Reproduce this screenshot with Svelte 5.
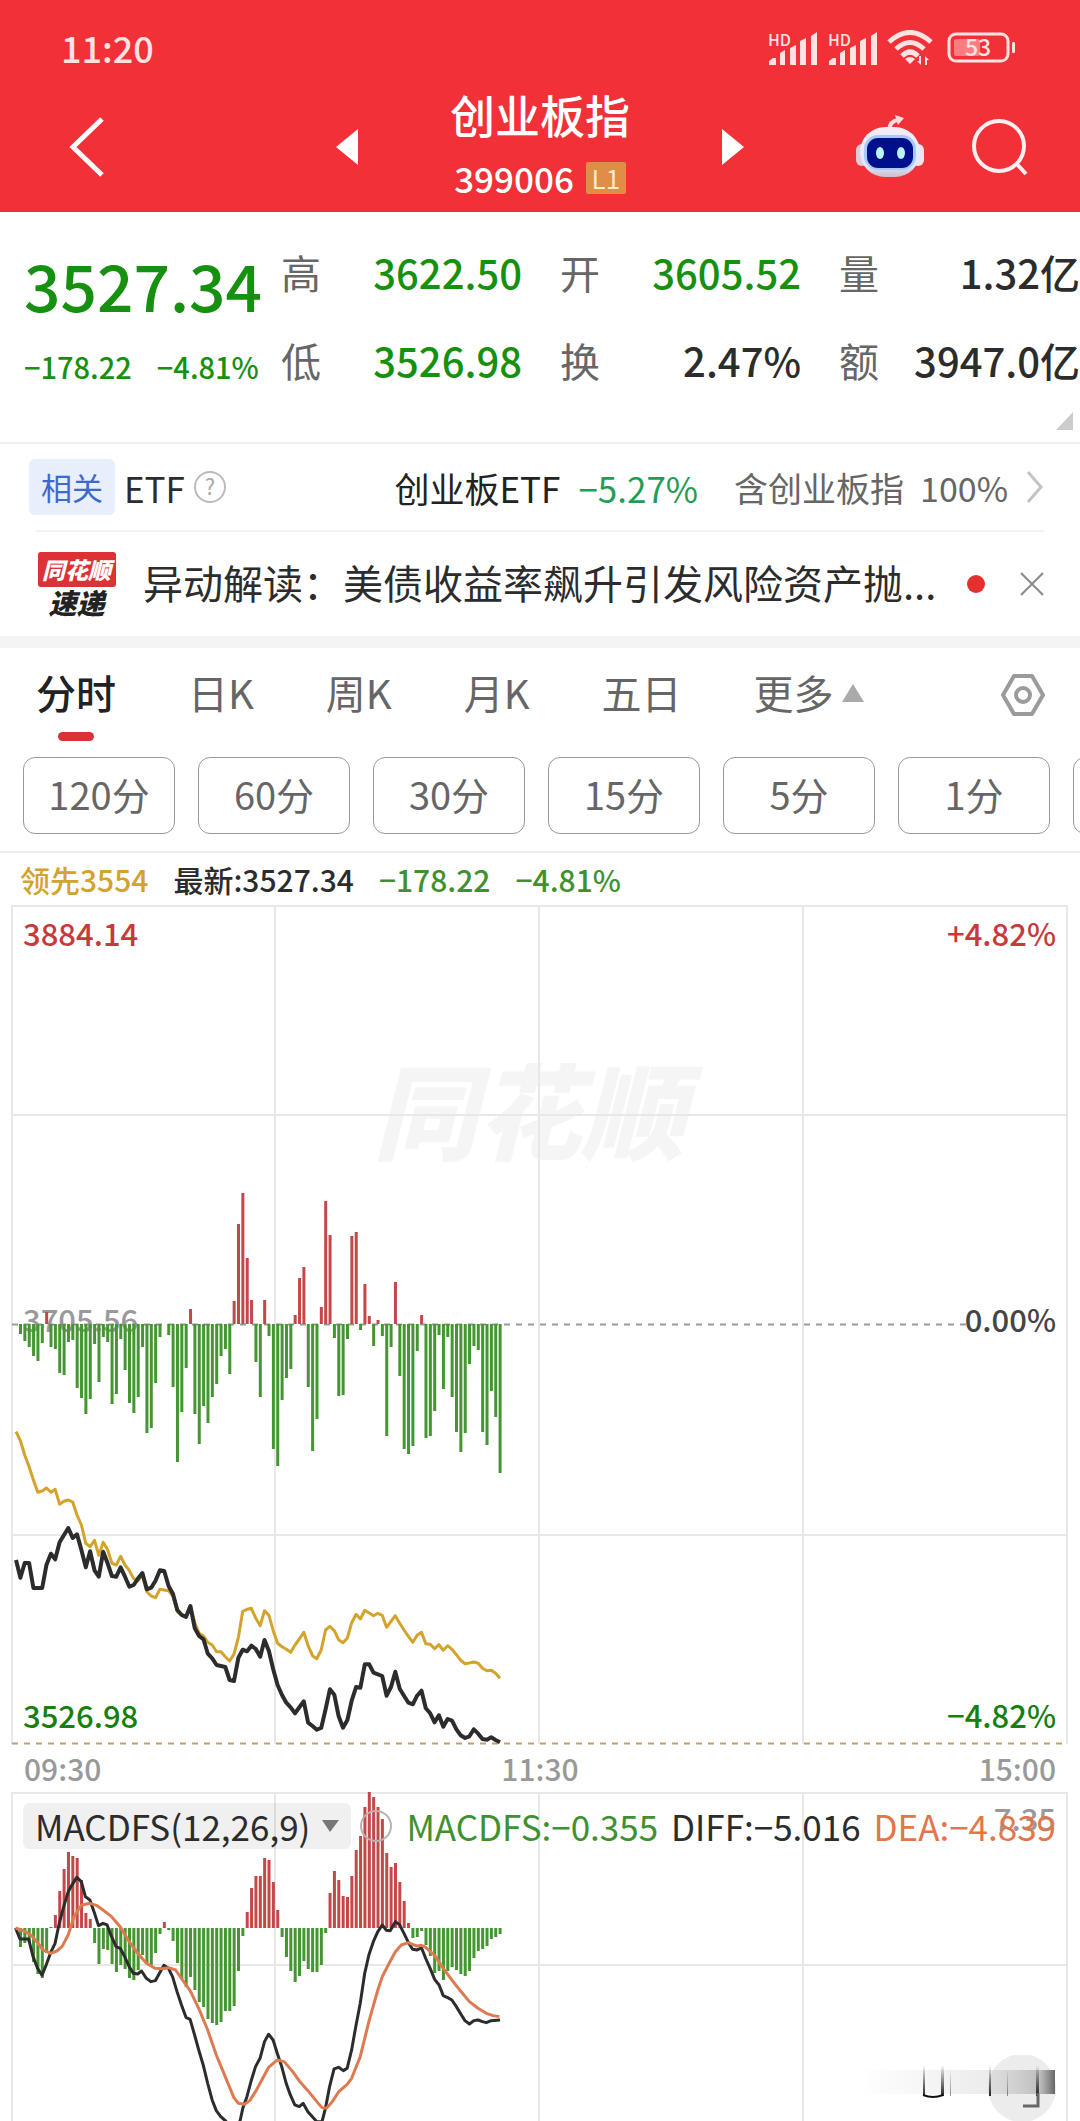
<script lang="ts">
  type Quote = { label: string; value: string; down?: boolean };

  const quotes: Quote[] = [
    { label: '高', value: '3622.50', down: true },
    { label: '开', value: '3605.52', down: true },
    { label: '量', value: '1.32亿' },
    { label: '低', value: '3526.98', down: true },
    { label: '换', value: '2.47%' },
    { label: '额', value: '3947.0亿' }
  ];

  const tabs = ['分时', '日K', '周K', '月K', '五日'];
  const periods = ['120分', '60分', '30分', '15分', '5分', '1分'];

  let activeTab = $state('分时');

  const STEP = 4.36;
  const ZERO_Y = 419;
  const MACD_ZERO_Y = 136;

  // one bar per minute, above or below the previous close
  const volume = [
    -10, -17, -23, -32, -37, -19, 12, -23, -25, -49, -51, -18, -16, -64, -74, -90, -75, -20, -58, -13,
    -18, -80, -70, -15, -46, -79, -89, -73, -23, -109, -104, -59, -13, 0, -11, -63, -138, -88, -44, 15,
    -90, -120, -82, -99, -73, -60, -32, -25, -50, 23, 100, 131, 66, 24, -38, -73, 24, -12, -125, -142,
    -76, -54, -45, 9, 46, 57, -63, -127, -95, 17, 123, 89, -14, -72, -71, -15, 88, 92, -6, 40,
    8, -22, 4, -12, -112, -23, 42, -52, -125, -130, -122, -27, 9, -114, -112, -87, -11, -65, -13, -73,
    -108, -128, -109, -40, -22, -26, -108, -121, -67, -93, -149
  ];

  // minute samples, in thirds of a unit below PRICE_TOP
  const PRICE_TOP = 495;
  const price = [
    480, 533, 489, 489, 564, 564, 564, 494, 461, 478, 427, 405, 384, 414, 403, 450, 502, 454, 511, 530,
    455, 490, 528, 530, 502, 530, 560, 555, 535, 519, 568, 563, 542, 511, 513, 558, 582, 630, 645, 651,
    618, 685, 708, 718, 761, 775, 795, 798, 801, 840, 843, 773, 749, 754, 737, 747, 770, 720, 753, 808,
    855, 885, 908, 922, 940, 922, 904, 968, 978, 989, 984, 928, 868, 884, 948, 983, 960, 902, 861, 863,
    793, 793, 818, 823, 828, 887, 861, 815, 866, 887, 908, 913, 887, 872, 925, 940, 967, 946, 980, 957,
    962, 988, 1006, 1014, 1009, 988, 1001, 1017, 1019, 1012, 1020, 1027
  ];
  const lead = [
    95, 122, 165, 200, 240, 277, 273, 264, 277, 268, 313, 304, 300, 306, 345, 375, 430, 440, 421, 466,
    427, 449, 490, 495, 469, 495, 512, 536, 542, 525, 575, 588, 593, 568, 570, 572, 590, 635, 645, 648,
    620, 668, 700, 708, 727, 735, 755, 755, 770, 783, 762, 712, 634, 628, 625, 655, 677, 632, 646, 692,
    730, 740, 748, 757, 735, 717, 697, 737, 767, 776, 750, 690, 679, 692, 719, 728, 714, 668, 643, 657,
    631, 639, 647, 640, 646, 682, 664, 647, 670, 690, 709, 727, 706, 697, 731, 733, 746, 734, 751, 737,
    748, 764, 781, 791, 789, 786, 790, 805, 812, 811, 820, 835
  ];

  const macd = [
    -19, -15, -14, -34, -46, -50, -25, 1, 13, 37, 59, 76, 72, 70, 48, 15, 9, -15, -36, -21,
    -22, -36, -44, -37, -41, -50, -52, -42, -27, -35, -37, -25, -6, 6, -2, -13, -35, -51, -59, -49,
    -62, -74, -79, -91, -95, -97, -94, -83, -83, -78, -43, -8, 16, 40, 52, 52, 70, 68, 46, 18,
    -9, -29, -43, -54, -48, -33, -41, -44, -44, -37, -5, 35, 57, 48, 32, 31, 52, 78, 92, 121,
    136, 131, 121, 109, 75, 61, 65, 46, 27, 5, -10, -9, -3, -17, -28, -45, -43, -52, -43, -39,
    -42, -46, -48, -43, -30, -23, -21, -18, -11, -9, -6
  ];

  const diffLine =
    '45,534 58,567 83,567 96,620 109,655 122,676 134,645 147,608 160,580 172,520 185,470 198,425 210,403 223,382 236,395 248,440 261,450 273,485 286,527 299,520 311,525 324,560 337,590 349,595 362,620 375,650 387,670 400,672 411,663 425,685 438,695 451,692 463,670 476,646 489,655 501,680 514,725 527,765 540,802 552,808 565,855 577,900 590,945 603,1000 616,1050 628,1082 641,1100 655,1113 675,1135 697,1113 705,1075 717,1040 730,990 742,950 755,925 768,875 780,853 793,870 805,910 818,950 831,1000 843,1035 856,1065 869,1070 880,1060 894,1085 907,1100 920,1115 935,1115 945,1075 957,1010 970,957 983,952 997,962 1008,955 1021,900 1033,830 1046,760 1059,670 1071,615 1084,575 1097,545 1110,525 1122,541 1133,542 1148,515 1160,524 1173,550 1186,578 1198,598 1211,600 1224,594 1236,625 1249,655 1262,688 1275,705 1287,737 1300,743 1312,750 1325,770 1338,792 1350,812 1363,822 1376,812 1388,810 1401,815 1412,818 1426,812 1452,810';
  const deaLine =
    '45,534 70,543 90,555 109,578 125,600 147,610 165,603 180,590 198,555 215,500 236,466 261,460 280,466 299,480 324,500 349,530 375,575 400,610 425,640 450,655 470,656 489,653 510,660 530,690 552,722 577,775 603,840 628,915 654,980 679,1043 692,1060 710,1063 725,1052 742,1025 768,975 780,952 805,930 825,935 850,965 869,993 894,1022 920,1055 935,1073 948,1075 965,1055 983,1026 1008,1003 1021,985 1046,920 1071,815 1097,720 1110,680 1130,640 1148,605 1165,585 1186,578 1198,583 1211,588 1224,586 1236,592 1262,616 1287,655 1312,690 1338,724 1363,755 1388,775 1412,790 1432,797 1450,800';

  function toPoints(samples: number[]) {
    return samples.map((v, i) => `${(5 + i * STEP).toFixed(1)},${(PRICE_TOP + v / 3).toFixed(1)}`).join(' ');
  }
</script>

{#snippet signal()}
  <svg class="signal" viewBox="0 0 52 40" aria-hidden="true">
    <text x="1" y="18" font-size="16" font-weight="500">HD</text>
    <path d="M2 37v-4l4-3h3v7zM13 37V25l5-3v15zM23 37V20l6-3v20zM33 37V13l6-3v27zM44 37V8l6-4v33z" />
  </svg>
{/snippet}

<main class="page">
  <header class="header">
    <div class="status">
      <span class="clock">11:20</span>
      <div class="status-icons">
        {@render signal()}
        {@render signal()}
        <svg class="wifi" viewBox="0 0 48 36" aria-hidden="true">
          <g fill="none" stroke="#ffe3e3" stroke-width="5">
            <path d="M2 12Q23-7 44 12" />
            <path d="M9 19Q23 6 37 19" />
            <path d="M15 26Q23 18 31 26" />
          </g>
          <path fill="#ffe3e3" d="M18 29q5-4 10 0l-5 5zM34 26v9l-4-4h2v-5zM38 35v-9l4 4h-2v5z" />
        </svg>
        <svg class="battery" viewBox="0 0 70 40" aria-hidden="true">
          <rect x="2" y="6" width="59" height="27" rx="7" fill="none" stroke="#ffe3e3" stroke-width="3" />
          <rect x="7" y="11" width="26" height="17" rx="2" fill="#ff7d80" />
          <rect x="65" y="14" width="3" height="11" rx="1" fill="#ffe3e3" />
          <text x="31" y="28" text-anchor="middle" font-size="23" font-weight="500">53</text>
        </svg>
      </div>
    </div>

    <nav class="nav">
      <div class="nav-side">
        <button class="icon-btn" aria-label="返回">
          <svg width="36" height="60" viewBox="0 0 36 60"><path d="M33 2 4 30l29 28" fill="none" stroke="#fff" stroke-width="5" /></svg>
        </button>
      </div>
      <div class="switcher">
        <button class="icon-btn" aria-label="上一个">
          <svg width="22" height="36" viewBox="0 0 22 36"><path d="M22 0v36L0 18z" fill="#fff" /></svg>
        </button>
        <div class="heading">
          <h1>创业板指</h1>
          <div class="code">399006 <span class="level">L1</span></div>
        </div>
        <button class="icon-btn" aria-label="下一个">
          <svg width="22" height="36" viewBox="0 0 22 36"><path d="M0 0v36l22-18z" fill="#fff" /></svg>
        </button>
      </div>
      <div class="nav-side end">
        <button class="icon-btn" aria-label="智能助手">
          <svg width="70" height="64" viewBox="0 0 70 64">
            <defs>
              <linearGradient id="shell" x1="0" y1="0" x2="0" y2="1">
                <stop offset="0" stop-color="#f4ecf2" />
                <stop offset="0.75" stop-color="#dfeaff" />
                <stop offset="1" stop-color="#cdbfca" />
              </linearGradient>
            </defs>
            <path d="M34 15q1-9 9-10" fill="none" stroke="#ffdcdc" stroke-width="4" />
            <path d="M40 0l9 3-6 7z" fill="#ffdcdc" />
            <rect x="1" y="29" width="12" height="22" rx="6" fill="#dccdd8" />
            <rect x="57" y="29" width="12" height="22" rx="6" fill="#f0e4ec" />
            <rect x="5" y="12" width="60" height="50" rx="25" fill="url(#shell)" />
            <rect x="9" y="20" width="52" height="35" rx="14" fill="#a9c8fb" />
            <rect x="12" y="23" width="46" height="30" rx="11" fill="#000f8c" />
            <ellipse cx="25" cy="38" rx="4" ry="6" fill="#b9f3ff" />
            <ellipse cx="46" cy="38" rx="4" ry="6" fill="#b9f3ff" />
          </svg>
        </button>
        <button class="icon-btn" aria-label="搜索">
          <svg width="60" height="60" viewBox="0 0 60 60">
            <g fill="none" stroke="#fff0f0" stroke-width="4">
              <circle cx="29" cy="29" r="25" />
              <path d="M46 46l10 11" />
            </g>
          </svg>
        </button>
      </div>
    </nav>
  </header>

  <section class="summary">
    <div class="last">
      <div class="last-price">3527.34</div>
      <div class="last-change"><span>−178.22</span><span>−4.81%</span></div>
    </div>
    <dl class="quotes">
      {#each quotes as q (q.label)}
        <div class="quote">
          <dt>{q.label}</dt>
          <dd class:down={q.down}>{q.value}</dd>
        </div>
      {/each}
    </dl>
    <span class="corner"></span>
  </section>

  <section class="etf">
    <span class="tag">相关</span>
    <span class="etf-title">ETF</span>
    <svg class="help" viewBox="0 0 32 32" aria-hidden="true">
      <circle cx="16" cy="16" r="15" fill="none" stroke="#bbb" stroke-width="2" />
      <text x="16" y="24" text-anchor="middle" font-size="22" fill="#aaa">?</text>
    </svg>
    <a class="etf-link" href="#etf">
      <span class="etf-name">创业板ETF</span>
      <span class="etf-change">−5.27%</span>
      <span class="etf-share"><span>含创业板指</span><span>100%</span></span>
      <svg width="18" height="32" viewBox="0 0 18 32" aria-hidden="true"><path d="M2 1l13 15L2 31" fill="none" stroke="#c4c4c4" stroke-width="3" /></svg>
    </a>
  </section>

  <section class="news">
    <div class="brand">
      <span class="brand-top">同花顺</span>
      <span class="brand-bottom">速递</span>
    </div>
    <a class="news-title" href="#news">异动解读：美债收益率飙升引发风险资产抛...</a>
    <span class="dot"></span>
    <button class="icon-btn" aria-label="关闭">
      <svg width="24" height="24" viewBox="0 0 24 24"><path d="M1 1l22 22M23 1 1 23" stroke="#8a8a8a" stroke-width="2" /></svg>
    </button>
  </section>

  <nav class="tabs">
    {#each tabs as tab (tab)}
      <button class="tab" class:active={tab === activeTab} onclick={() => (activeTab = tab)}>{tab}</button>
    {/each}
    <button class="tab more">更多<svg width="22" height="18" viewBox="0 0 22 18"><path d="M11 0l11 18H0z" fill="#aaa" /></svg></button>
    <button class="icon-btn settings" aria-label="设置">
      <svg width="46" height="44" viewBox="0 0 46 44">
        <g fill="none" stroke="#9b9b9b" stroke-width="4">
          <path d="M14 3h18l11 19-11 19H14L3 22z" stroke-linejoin="round" />
          <circle cx="23" cy="22" r="7" />
        </g>
      </svg>
    </button>
  </nav>

  <div class="periods">
    {#each periods as p (p)}
      <button class="period">{p}</button>
    {/each}
    <button class="period" aria-label="更多周期"></button>
  </div>

  <div class="legend">
    <span class="lead">领先3554</span>
    <span>最新:3527.34</span>
    <span class="fall">−178.22</span>
    <span class="fall">−4.81%</span>
  </div>

  <section class="charts">
    <svg class="chart" viewBox="0 0 1057 840" role="img" aria-label="分时走势">
      <text class="watermark" x="518" y="247" text-anchor="middle">同花顺</text>
      <g class="grid">
        <path d="M1 839V1h1055v838M264 1v838M528 1v838M792 1v838M1 210h1055M1 630h1055" />
      </g>
      <text class="axis muted" x="12" y="427">3705.56</text>
      <path class="zero" d="M1 419.5h955" />
      {#each volume as v, i}
        <rect x={8 + i * STEP} y={v > 0 ? ZERO_Y - v : ZERO_Y} width="3" height={Math.abs(v)} fill={v > 0 ? '#c4474a' : '#459633'} />
      {/each}
      <path class="floor" d="M1 838.5h1055" />
      <polyline points={toPoints(lead)} stroke="#d3a32c" />
      <polyline class="thick" points={toPoints(price)} stroke="#2c2c2c" />
      <text class="axis rise" x="12" y="41">3884.14</text>
      <text class="axis rise" x="1045" y="41" text-anchor="end">+4.82%</text>
      <text class="axis" x="1045" y="427" text-anchor="end">0.00%</text>
      <text class="axis low" x="12" y="823">3526.98</text>
      <text class="axis low" x="1045" y="823" text-anchor="end">−4.82%</text>
    </svg>

    <div class="times"><span>09:30</span><span>11:30</span><span>15:00</span></div>

    <div class="macd">
      <svg class="chart" viewBox="0 0 1057 329" role="img" aria-label="MACDFS">
        <g class="grid">
          <path d="M1 329V1h1055v328M264 1v328M528 1v328M792 1v328M1 173h1055" />
        </g>
        {#each macd as v, i}
          <rect x={8 + i * STEP} y={v > 0 ? MACD_ZERO_Y - v : MACD_ZERO_Y} width="3" height={Math.abs(v)} fill={v > 0 ? '#c4474a' : '#459633'} />
        {/each}
        <g transform="translate(-11 -42) scale(0.3444 0.3333)">
          <polyline class="thin" points={diffLine} stroke="#2c2c2c" />
          <polyline class="thin" points={deaLine} stroke="#dd7a50" />
        </g>
        <text class="axis muted" x="1045" y="39" text-anchor="end">7.35</text>
      </svg>
      <div class="macd-bar">
        <button class="indicator">MACDFS(12,26,9)<svg width="17" height="12" viewBox="0 0 17 12"><path d="M0 0h17L8 12z" fill="#777" /></svg></button>
        <svg class="help" viewBox="0 0 32 32" aria-hidden="true"><circle cx="16" cy="16" r="15" fill="none" stroke="#b9b0b0" stroke-width="2" /></svg>
        <div class="readings">
          <span class="fall">MACDFS:−0.355</span>
          <span>DIFF:−5.016</span>
          <span class="dea">DEA:−4.839</span>
        </div>
      </div>
      <button class="float" aria-label="全屏">
        <svg width="200" height="66" viewBox="0 0 200 66">
          <defs>
            <linearGradient id="smear" x1="0" x2="1">
              <stop offset="0" stop-color="#999" stop-opacity="0" />
              <stop offset="0.7" stop-color="#999" stop-opacity="0.2" />
              <stop offset="0.92" stop-color="#888" stop-opacity="0.45" />
              <stop offset="1" stop-color="#555" stop-opacity="0.9" />
            </linearGradient>
            <linearGradient id="streak" x1="0" y1="0" x2="0" y2="1">
              <stop offset="0" stop-color="#222" stop-opacity="0" />
              <stop offset="1" stop-color="#222" />
            </linearGradient>
          </defs>
          <circle cx="166" cy="33" r="34" fill="#ececec" />
          <rect x="4" y="15" width="195" height="24" fill="url(#smear)" />
          <g fill="url(#streak)">
            <rect x="67" y="10" width="2" height="31" />
            <rect x="85" y="10" width="3" height="31" />
            <rect x="94" y="14" width="1" height="27" opacity="0.5" />
            <rect x="133" y="10" width="2" height="31" />
            <rect x="151" y="14" width="1" height="27" opacity="0.5" />
            <rect x="180" y="10" width="3" height="31" />
          </g>
          <path d="M67 40q10 4 20 0" fill="none" stroke="#111" stroke-width="2" />
          <path d="M182 38v13h-15" fill="none" stroke="#666" stroke-width="3" />
        </svg>
      </button>
    </div>
  </section>
</main>

<style>
  :global(body) {
    background: #fff;
  }

  .page {
    font-family: 'Noto Sans CJK SC', 'Noto Sans', sans-serif;
    color: #2c2c2c;
    background: #fff;
    overflow: hidden;
  }

  button {
    font: inherit;
    color: inherit;
    background: none;
    border: none;
    padding: 0;
    cursor: pointer;
  }

  a {
    color: inherit;
    text-decoration: none;
  }

  svg {
    display: block;
    flex: none;
  }

  .icon-btn {
    display: flex;
  }

  .header {
    background: #f23037;
    color: #fff;
    border-bottom: 1px solid #cf3d42;
  }

  .status {
    display: flex;
    align-items: center;
    justify-content: space-between;
    height: 72px;
    padding: 12px 63px 0 61px;
  }

  .clock {
    padding-bottom: 2px;
    font-size: 36px;
    font-weight: 500;
    line-height: 40px;
    color: #ffe3e3;
  }

  .status-icons {
    display: flex;
    align-items: center;
    gap: 8px;
  }

  .signal {
    width: 52px;
    height: 40px;
    fill: #ffe3e3;
  }

  .wifi {
    width: 48px;
    height: 36px;
  }

  .battery {
    width: 70px;
    height: 40px;
    margin-left: 4px;
    fill: #ffe3e3;
  }

  .nav {
    display: grid;
    grid-template-columns: 1fr 408px 1fr;
    align-items: center;
    height: 124px;
    padding-bottom: 3px;
  }

  .nav-side {
    padding-left: 69px;
  }

  .end {
    display: flex;
    align-items: center;
    justify-content: flex-end;
    gap: 45px;
    padding: 0 50px 0 0;
  }

  .switcher {
    display: flex;
    align-items: center;
    justify-content: space-between;
  }

  .heading {
    text-align: center;
  }

  h1 {
    margin: 0;
    font-size: 45px;
    font-weight: 500;
    line-height: 62px;
  }

  .code {
    display: flex;
    align-items: center;
    justify-content: center;
    gap: 12px;
    font-size: 35px;
    font-weight: 500;
    line-height: 64px;
  }

  .level {
    width: 40px;
    font-size: 26px;
    font-weight: 400;
    line-height: 32px;
    color: #ffeccb;
    background: #e08d45;
    border-radius: 2px;
  }

  .summary {
    position: relative;
    display: flex;
    padding-top: 20px;
    height: 210px;
    border-bottom: 2px solid #f0f0f0;
  }

  .last {
    width: 281px;
    box-sizing: border-box;
    padding-left: 24px;
    color: #16900f;
    white-space: nowrap;
  }

  .last-price {
    font-size: 64px;
    font-weight: 500;
    line-height: 104px;
  }

  .last-change {
    display: flex;
    gap: 25px;
    font-size: 29px;
    font-weight: 500;
    line-height: 60px;
  }

  .quotes {
    flex: 1;
    display: grid;
    grid-template-columns: repeat(3, 1fr);
    grid-auto-rows: 88px;
    column-gap: 38px;
    margin: 0;
    white-space: nowrap;
  }

  .quote {
    display: flex;
    justify-content: space-between;
    font-size: 40px;
    line-height: 80px;
  }

  dt {
    color: #666;
  }

  dd {
    margin: 0;
    font-weight: 500;
  }

  dd.down {
    color: #16900f;
  }

  .corner {
    position: absolute;
    right: 7px;
    bottom: 12px;
    border-left: 17px solid transparent;
    border-bottom: 18px solid #ccc;
  }

  .etf {
    display: flex;
    align-items: center;
    height: 86px;
    margin: 0 36px;
    font-size: 35px;
    border-bottom: 2px solid #f2f2f2;
    white-space: nowrap;
  }

  .tag {
    margin-left: -7px;
    padding: 0 12px;
    font-size: 31px;
    line-height: 56px;
    color: #3f68cc;
    background: #e7eefc;
    border-radius: 6px;
  }

  .etf-title {
    margin: 0 9px;
  }

  .help {
    width: 32px;
    height: 32px;
  }

  .etf-link {
    display: flex;
    align-items: center;
    margin-left: auto;
  }

  .etf-name {
    color: #222;
    margin-right: 18px;
  }

  .etf-change {
    color: #1f9d55;
    margin-right: 36px;
  }

  .etf-share {
    display: flex;
    gap: 16px;
    font-size: 34px;
    color: #666;
    margin-right: 18px;
  }

  .news {
    display: flex;
    align-items: center;
    height: 104px;
    padding: 0 36px;
    border-bottom: 12px solid #f4f4f4;
    white-space: nowrap;
  }

  .brand {
    display: flex;
    flex-direction: column;
    align-items: center;
    width: 81px;
    font-style: italic;
    font-weight: 900;
  }

  .brand-top {
    width: 78px;
    font-size: 23px;
    line-height: 35px;
    text-align: center;
    color: #fff;
    background: #dc3236;
    border-radius: 3px;
  }

  .brand-bottom {
    font-size: 28px;
    line-height: 30px;
    color: #222;
  }

  .news-title {
    margin-left: 26px;
    padding-bottom: 4px;
    font-size: 40px;
  }

  .dot {
    width: 18px;
    height: 18px;
    margin-left: auto;
    margin-right: 35px;
    border-radius: 50%;
    background: #e5302f;
  }

  .tabs {
    display: flex;
    align-items: center;
    gap: 72px;
    height: 93px;
    padding: 0 34px 0 36px;
    color: #666;
    font-size: 40px;
    white-space: nowrap;
  }

  .tab {
    position: relative;
    padding-bottom: 4px;
    line-height: 89px;
  }

  .active {
    color: #222;
    font-weight: 500;
  }

  .active::after {
    content: '';
    position: absolute;
    left: 50%;
    bottom: 0;
    width: 36px;
    height: 9px;
    margin-left: -18px;
    border-radius: 5px;
    background: #dc3236;
  }

  .more {
    display: flex;
    align-items: center;
    gap: 8px;
  }

  .settings {
    margin-left: auto;
  }

  .periods {
    display: flex;
    gap: 23px;
    padding: 16px 0 17px 23px;
    border-bottom: 2px solid #ececec;
    overflow: hidden;
  }

  .period {
    flex: 0 0 152px;
    height: 77px;
    padding-bottom: 4px;
    font-size: 38px;
    color: #666;
    border: 1px solid #999;
    border-radius: 12px;
  }

  .legend {
    display: flex;
    gap: 25px;
    padding-left: 20px;
    font-size: 30px;
    font-weight: 500;
    line-height: 52px;
  }

  .lead {
    color: #d3a32c;
  }

  .fall {
    color: #3f9130;
  }

  .dea {
    color: #e3754a;
  }

  .charts {
    padding: 0 12px 0 11px;
  }

  .chart {
    width: 100%;
  }

  .chart polyline {
    fill: none;
    stroke-width: 3;
    stroke-linejoin: round;
  }

  .chart .thick {
    stroke-width: 4;
  }

  .chart .thin {
    vector-effect: non-scaling-stroke;
  }

  .grid {
    fill: none;
    stroke: #e8e8e8;
    stroke-width: 2;
  }

  .zero,
  .floor {
    fill: none;
    stroke: #999;
    stroke-width: 2;
    stroke-dasharray: 6 6;
  }

  .floor {
    stroke: #c0a070;
  }

  .watermark {
    font-size: 104px;
    font-weight: 900;
    font-style: italic;
    fill: #f5f5f5;
  }

  .axis {
    font-size: 31px;
    font-weight: 500;
    fill: #444;
  }

  .muted {
    fill: #999;
  }

  .rise {
    fill: #c73a3c;
  }

  .low {
    fill: #16800f;
  }

  .times {
    display: flex;
    justify-content: space-between;
    padding: 0 12px 0 13px;
    font-size: 30px;
    font-weight: 500;
    line-height: 47px;
    color: #999;
  }

  .macd {
    position: relative;
  }

  .macd-bar {
    position: absolute;
    top: 11px;
    left: 12px;
    right: 12px;
    display: flex;
    align-items: center;
    font-size: 35px;
    line-height: 46px;
    white-space: nowrap;
  }

  .indicator {
    display: flex;
    align-items: center;
    gap: 12px;
    padding: 0 12px;
    margin-right: 9px;
    background: rgba(0, 0, 0, 0.06);
    border-radius: 6px;
  }

  .readings {
    display: flex;
    justify-content: space-between;
    flex: 1;
    margin-left: 14px;
  }

  .float {
    position: absolute;
    right: 12px;
    bottom: 0;
  }
</style>
